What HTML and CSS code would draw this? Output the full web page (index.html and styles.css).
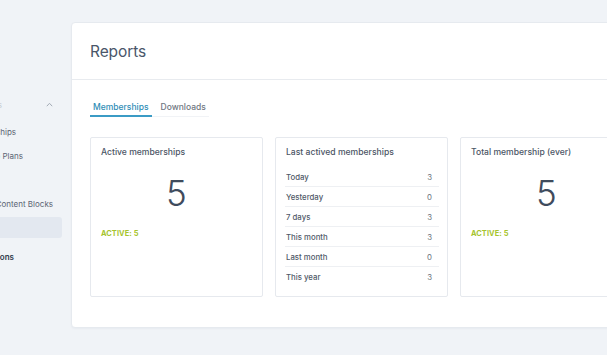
FILE: index.html
```html
<!DOCTYPE html>
<html lang="en">
<head>
<meta charset="utf-8">
<title>Reports</title>
<link rel="stylesheet" href="styles.css">
</head>
<body>
<div class="layout">
  <aside class="sidebar">
    <div class="nav-group">
      <div class="nav-head"><span class="nav-text">Memberships</span>
        <svg class="chev" width="7" height="5" viewBox="0 0 7 5"><path d="M0.8 4.2 L3.5 1.3 L6.2 4.2" fill="none" stroke="#a3abb5" stroke-width="1"/></svg>
      </div>
      <div class="nav-item end-16"><span>Memberships</span></div>
      <div class="nav-item end-23"><span>Membership Plans</span></div>
      <div class="nav-item"><span class="off">Members</span></div>
      <div class="nav-item end-53"><span>Restricted Content Blocks</span></div>
      <div class="nav-item active"><span class="off">Reports</span></div>
    </div>
    <div class="nav-item strong end-14"><span>Integrations</span></div>
  </aside>
  <main class="panel">
    <header class="panel-head"><h1>Reports</h1></header>
    <div class="panel-body">
      <nav class="tabs">
        <span class="tab current">Memberships</span>
        <span class="tab">Downloads</span>
      </nav>
      <div class="cards">
        <section class="card">
          <h2>Active memberships</h2>
          <div class="big">5</div>
          <div class="status">Active: 5</div>
        </section>
        <section class="card">
          <h2>Last actived memberships</h2>
          <ul class="rows">
            <li><span>Today</span><span class="val">3</span></li>
            <li><span>Yesterday</span><span class="val">0</span></li>
            <li><span>7 days</span><span class="val">3</span></li>
            <li><span>This month</span><span class="val">3</span></li>
            <li><span>Last month</span><span class="val">0</span></li>
            <li><span>This year</span><span class="val">3</span></li>
          </ul>
        </section>
        <section class="card">
          <h2>Total membership (ever)</h2>
          <div class="big">5</div>
          <div class="status">Active: 5</div>
        </section>
      </div>
    </div>
  </main>
</div>
</body>
</html>
```

FILE: styles.css
```css
* { box-sizing: border-box; }
html, body { margin: 0; padding: 0; }
body {
  background: #f0f3f7;
  font-family: Inter, "Noto Sans", "Liberation Sans", sans-serif;
  color: #4a5565;
  width: 607px;
  height: 355px;
  overflow: hidden;
}
.layout {
  display: flex;
  gap: 7px;
  align-items: flex-start;
}
.sidebar {
  flex: none;
  width: 64px;
  overflow: hidden;
  padding-top: 94px;
  font-size: 8px;
  color: #5b6574;
}
.nav-head {
  position: relative;
  height: 22px;
  display: flex;
  justify-content: flex-end;
  align-items: center;
  padding-right: 62px;
  white-space: nowrap;
  margin-bottom: 5px;
  color: #c3c9d0;
}
.chev {
  position: absolute;
  left: 46px;
  top: 8px;
}
.nav-item {
  height: 21px;
  margin-bottom: 3px;
  display: flex;
  justify-content: flex-end;
  align-items: center;
  white-space: nowrap;
  overflow: hidden;
}
.nav-item span { flex: none; }
.nav-item .off { margin-right: 66px; }
.end-16 { padding-right: 48px; }
.end-23 { padding-right: 41px; }
.end-53 { padding-right: 11px; }
.end-14 { padding-right: 50px; }
.nav-item.active {
  background: #e3e8f0;
  border-radius: 0 3px 3px 0;
  width: 62px;
}
.nav-item.strong {
  margin-top: 8px;
  font-weight: 600;
  color: #2f3a4a;
}
.panel {
  flex: none;
  width: 600px;
  margin-top: 22px;
  height: 306px;
  background: #ffffff;
  border: 1px solid #e6eaef;
  border-radius: 4px;
  box-shadow: 0 1px 2px rgba(30, 45, 70, 0.04);
}
.panel-head {
  height: 57px;
  display: flex;
  align-items: center;
  padding-left: 18px;
  border-bottom: 1px solid #e8ebef;
}
.panel-head h1 {
  margin: 0;
  font-size: 15.5px;
  font-weight: 400;
  color: #4a5669;
  letter-spacing: -0.1px;
}
.panel-body {
  padding: 14px 0 0 18px;
}
.tabs {
  display: inline-flex;
  gap: 6px;
  border-bottom: 1px solid #f1f3f6;
}
.tab {
  padding: 3px 3px 3px;
  font-size: 8.5px;
  font-weight: 500;
  color: #6f7782;
  border-bottom: 2px solid transparent;
  margin-bottom: -1px;
}
.tab.current {
  color: #2f8db6;
  border-bottom-color: #3b9bc5;
}
.cards {
  margin-top: 20px;
  display: flex;
  gap: 12px;
}
.card {
  flex: none;
  width: 173px;
  height: 160px;
  border: 1px solid #e6e9ee;
  border-radius: 2px;
  padding: 9px 10px 0;
}
.card h2 {
  margin: 0;
  font-size: 8.6px;
  line-height: 11px;
  font-weight: 500;
  color: #4b5565;
}
.big {
  margin-top: 14px;
  text-align: center;
  font-size: 35px;
  line-height: 42px;
  font-weight: 300;
  color: #3f4b5d;
}
.status {
  margin-top: 15px;
  font-size: 7.4px;
  font-weight: 700;
  text-transform: uppercase;
  color: #a6c42d;
  letter-spacing: 0.1px;
}
.rows {
  list-style: none;
  margin: 9px -2px 0 -1px;
  padding: 0;
}
.rows li {
  height: 20px;
  display: flex;
  justify-content: space-between;
  align-items: center;
  padding: 0 7px 0 1px;
  border-bottom: 1px solid #eef0f3;
  font-size: 7.8px;
  font-weight: 500;
  color: #4f5968;
}
.rows li:last-child { border-bottom: none; }
.rows .val {
  color: #6c7580;
  font-weight: 400;
}
```
